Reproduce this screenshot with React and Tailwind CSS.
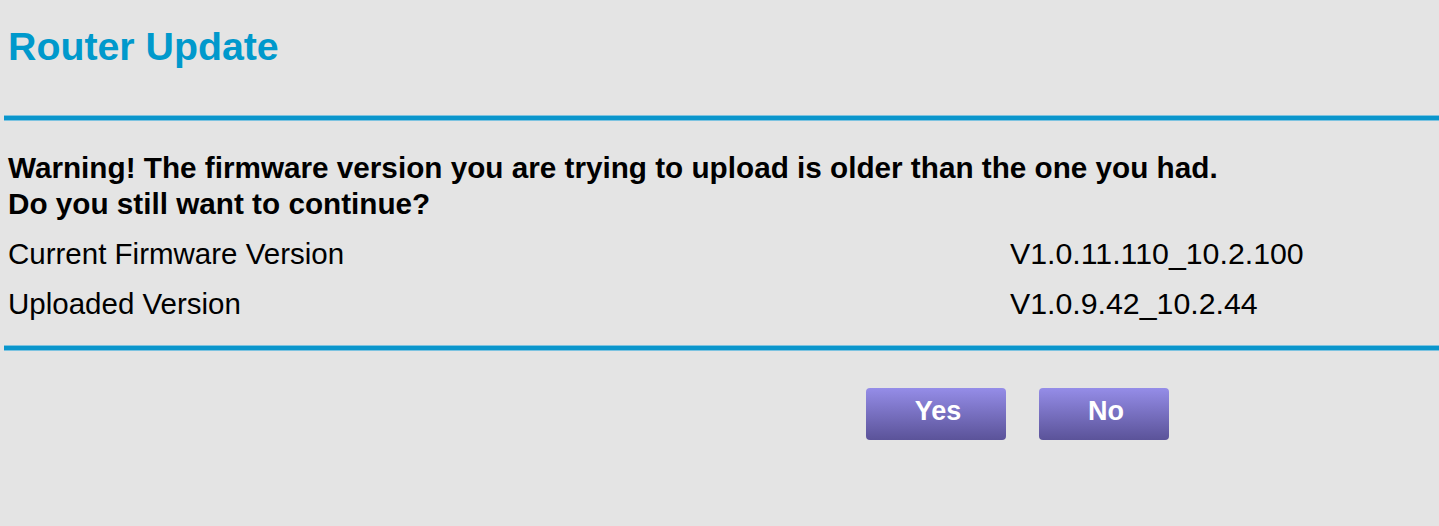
export default function App() {
  return (
    <div
      className="w-[1439px] h-[526px] bg-[#e4e4e4] overflow-hidden"
      style={{ fontFamily: '"Liberation Sans", Arial, sans-serif' }}
    >
      <div className="pl-[8px] pt-[24px] h-[115px]">
        <h1 className="text-[39.3px] leading-[44px] font-bold text-[#0099cc]">Router Update</h1>
      </div>
      <div className="ml-[4px] h-[6px] flex flex-col">
        <div className="h-[1px] bg-[#7cc3e0]" />
        <div className="h-[4px] bg-[#0a96cc]" />
        <div className="h-[1px] bg-[#7cc3e0]" />
      </div>
      <div className="pl-[8px] pt-[29px] text-black">
        <p className="text-[29.7px] leading-[36px] font-bold">
          Warning! The firmware version you are trying to upload is older than the one you had.
          <br />
          Do you still want to continue?
        </p>
        <div className="grid grid-cols-[1002px_1fr] text-[29.5px] leading-[50px] mt-[7px]">
          <div>Current Firmware Version</div>
          <div className="text-[30.3px]">V1.0.11.110_10.2.100</div>
          <div>Uploaded Version</div>
          <div className="text-[30.3px]">V1.0.9.42_10.2.44</div>
        </div>
      </div>
      <div className="ml-[4px] mt-[16px] h-[6px] flex flex-col">
        <div className="h-[1px] bg-[#7cc3e0]" />
        <div className="h-[4px] bg-[#0a96cc]" />
        <div className="h-[1px] bg-[#7cc3e0]" />
      </div>
      <div className="flex pl-[866px] pt-[37px] gap-[33px]">
        <button className="w-[140px] h-[52px] rounded-[4px] bg-gradient-to-b from-[#958de8] to-[#5b5399] text-white font-bold text-[27px] pb-[5px] pl-[4px]">
          Yes
        </button>
        <button className="w-[130px] h-[52px] rounded-[4px] bg-gradient-to-b from-[#958de8] to-[#5b5399] text-white font-bold text-[27px] pb-[5px] pl-[4px]">
          No
        </button>
      </div>
    </div>
  );
}
